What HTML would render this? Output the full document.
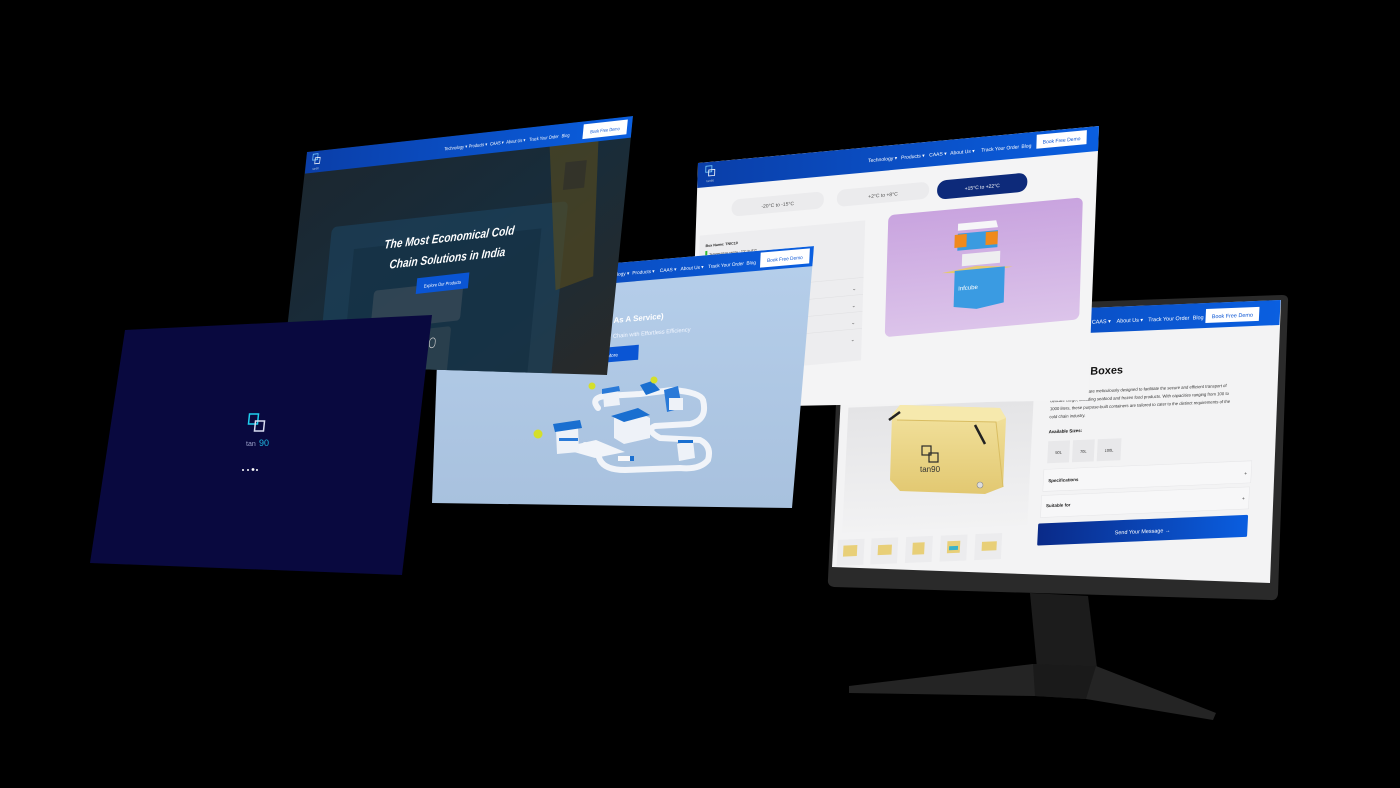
<!DOCTYPE html>
<html><head><meta charset="utf-8"><style>
html,body{margin:0;padding:0;background:#000;width:1400px;height:788px;overflow:hidden}
svg{display:block}
text{font-family:"Liberation Sans",sans-serif}
</style></head><body>
<svg width="1400" height="788" viewBox="0 0 1400 788" xmlns="http://www.w3.org/2000/svg">
<defs>
<linearGradient id="btn" x1="0" x2="1"><stop offset="0" stop-color="#0a2a88"/><stop offset="1" stop-color="#0a5ee0"/></linearGradient>
<linearGradient id="nav" x1="0" x2="1"><stop offset="0" stop-color="#0a3ea8"/><stop offset="1" stop-color="#0a5fe0"/></linearGradient>
<linearGradient id="hero" x1="0" y1="0" x2="1" y2="1"><stop offset="0" stop-color="#1d252c"/><stop offset="0.5" stop-color="#182c3a"/><stop offset="1" stop-color="#2a2a28"/></linearGradient>
<linearGradient id="sky" x1="0" y1="0" x2="0" y2="1"><stop offset="0" stop-color="#b6cfeb"/><stop offset="1" stop-color="#a8c1de"/></linearGradient>
<linearGradient id="purp" x1="0" y1="0" x2="0" y2="1"><stop offset="0" stop-color="#c9a4df"/><stop offset="1" stop-color="#dcc4ea"/></linearGradient>
<linearGradient id="yb" x1="0" y1="0" x2="0" y2="1"><stop offset="0" stop-color="#f3e3a0"/><stop offset="1" stop-color="#e2c871"/></linearGradient>
<linearGradient id="gimg" x1="0" y1="0" x2="0" y2="1"><stop offset="0" stop-color="#e4e4e6"/><stop offset="1" stop-color="#f2f2f3"/></linearGradient>
<clipPath id="heroClip"><polygon points="307,152 633,116 607,375 283,365"/></clipPath>
<clipPath id="blueClip"><polygon points="440,278 814,246 792,508 432,503"/></clipPath>
<clipPath id="whiteClip"><polygon points="698,163 1099,126 1088,400 690,408"/></clipPath>
</defs>

<!-- MONITOR -->
<polygon points="1030,593 1088,596 1097,668 1037,668" fill="#1c1c1c"/>
<polygon points="849,686 1033,664 1096,666 1216,713 1213,720 1086,699 1035,696 849,693" fill="#242424"/>
<polygon points="1033,664 1096,666 1086,699 1035,696" fill="#1a1a1a"/>
<path d="M846,310 L1282,295 Q1289,295 1288,302 L1278,594 Q1277,601 1270,600 L834,587 Q827,586 828,579 L840,316 Q841,310 846,310 Z" fill="#2a2a2a"/>
<polygon points="845,318 1281,300 1270,583 832,567" fill="#f3f3f4"/>
<g transform="matrix(0.99,-0.041,-0.05,1,845,318)">
  <rect x="0" y="0" width="440" height="25" fill="url(#nav)"/>
  <text x="250" y="16" font-size="5.5" fill="#fff">CAAS ▾</text>
  <text x="275" y="16" font-size="5.5" fill="#fff">About Us ▾</text>
  <text x="307" y="16" font-size="5.5" fill="#fff">Track Your Order</text>
  <text x="352" y="16" font-size="5.5" fill="#fff">Blog</text>
  <rect x="365" y="6" width="54" height="14" fill="#fff"/>
  <text x="392" y="15.5" font-size="5.5" fill="#0a55d4" text-anchor="middle">Book Free Demo</text>
  <text x="284" y="67" font-size="11" font-weight="bold" fill="#111" text-anchor="end">Cooler Boxes</text>
  <g font-size="4.3" fill="#333">
  <text x="212" y="85">Tan90 cooler boxes are meticulously designed to facilitate the secure and efficient transport of</text>
  <text x="212" y="93">delicate cargo, including seafood and frozen food products. With capacities ranging from 100 to</text>
  <text x="212" y="101">1000 liters, these purpose-built containers are tailored to cater to the distinct requirements of the</text>
  <text x="212" y="109">cold chain industry.</text>
  </g>
  <text x="212" y="124" font-size="4.5" font-weight="bold" fill="#111">Available Sizes:</text>
  <rect x="212" y="132" width="22" height="22" fill="#e8e8ea"/><text x="223" y="145" font-size="4" fill="#333" text-anchor="middle">50L</text>
  <rect x="237" y="132" width="22" height="22" fill="#e8e8ea"/><text x="248" y="145" font-size="4" fill="#333" text-anchor="middle">70L</text>
  <rect x="262" y="132" width="24" height="22" fill="#e8e8ea"/><text x="274" y="145" font-size="4" fill="#333" text-anchor="middle">100L</text>
  <rect x="209" y="160" width="210" height="22" fill="#f7f7f8" stroke="#e5e5e7" stroke-width="0.5"/>
  <text x="214" y="173" font-size="4.5" font-weight="bold" fill="#222">Specifications</text><text x="412" y="174" font-size="5" fill="#444">+</text>
  <rect x="208" y="186" width="210" height="22" fill="#f7f7f8" stroke="#e5e5e7" stroke-width="0.5"/>
  <text x="213" y="198" font-size="4.5" font-weight="bold" fill="#222">Suitable for</text><text x="411" y="199" font-size="5" fill="#444">+</text>
  <rect x="206" y="214" width="212" height="22" rx="1.5" fill="url(#btn)"/>
  <text x="312" y="228" font-size="5.5" fill="#fff" text-anchor="middle">Send Your Message →</text>
  <rect x="8" y="90" width="187" height="125" fill="url(#gimg)"/>
  <g fill="#ececee">
  <rect x="4" y="222" width="27" height="26"/><rect x="38" y="222" width="27" height="26"/><rect x="73" y="222" width="27" height="26"/><rect x="108" y="222" width="27" height="26"/><rect x="143" y="222" width="27" height="26"/>
  </g>
  <g fill="#e8cf78">
  <rect x="10" y="228" width="14" height="11"/><rect x="45" y="229" width="14" height="10"/><rect x="80" y="228" width="12" height="12"/><rect x="115" y="228" width="13" height="12"/><rect x="150" y="230" width="15" height="9"/>
  </g>
  <rect x="117" y="233" width="9" height="4" fill="#3ab2c8"/>
</g>
<!-- yellow cooler box -->
<path d="M892,415 L900,405 L1000,408 L1006,418 L1003,487 L985,494 L900,491 L890,480 Z" fill="url(#yb)"/>
<path d="M892,415 L900,405 L1000,408 L1006,418 L996,422 L898,420 Z" fill="#f6e9ad"/>
<path d="M897,420 L996,422 L1003,487" fill="none" stroke="#d9bd62" stroke-width="1"/>
<path d="M889,420 L900,412 M975,425 L985,444" stroke="#222" stroke-width="2.5"/>
<rect x="922" y="446" width="9" height="9" fill="none" stroke="#2a2a2a" stroke-width="1.2"/>
<rect x="929" y="453" width="9" height="9" fill="none" stroke="#2a2a2a" stroke-width="1.2"/>
<text x="920" y="472" font-size="8" fill="#333">tan90</text>
<circle cx="980" cy="485" r="3" fill="#ddd" stroke="#888" stroke-width="0.6"/>

<!-- WHITE SCREEN (top right) -->
<polygon points="698,163 1099,126 1088,400 690,408" fill="#f4f4f5"/>
<g clip-path="url(#whiteClip)">
<g transform="matrix(1.0025,-0.0925,-0.03,1,698,163)">
  <rect x="0" y="0" width="401" height="25" fill="url(#nav)"/>
  <rect x="8" y="4" width="6" height="6" fill="none" stroke="#7fd3ff" stroke-width="0.8"/><rect x="11" y="8" width="6" height="6" fill="none" stroke="#fff" stroke-width="0.8"/>
  <text x="9" y="20" font-size="3" fill="#bcd">tan90</text>
  <g font-size="5" fill="#fff">
  <text x="170" y="15">Technology ▾</text><text x="203" y="15">Products ▾</text><text x="231" y="15">CAAS ▾</text><text x="252" y="15">About Us ▾</text><text x="283" y="15">Track Your Order</text><text x="323" y="15">Blog</text>
  </g>
  <rect x="338" y="3" width="50" height="14" fill="#fff"/>
  <text x="363" y="12.5" font-size="5" fill="#0a55d4" text-anchor="middle">Book Free Demo</text>
  <rect x="35" y="40" width="92" height="17" rx="8" fill="#ebebed"/>
  <text x="81" y="51" font-size="5" fill="#555" text-anchor="middle">-20°C to -15°C</text>
  <rect x="140" y="40" width="92" height="17" rx="8" fill="#ebebed"/>
  <text x="186" y="51" font-size="5" fill="#555" text-anchor="middle">+2°C to +8°C</text>
  <rect x="240" y="40" width="90" height="19" rx="9" fill="#0d2a7a"/>
  <text x="285" y="52" font-size="5" fill="#fff" text-anchor="middle">+15°C to +22°C</text>
  <rect x="4" y="73" width="165" height="140" fill="#ededef"/>
  <text x="10" y="85" font-size="3.6" font-weight="bold" fill="#222">Box Name: TNIC10</text>
  <rect x="10" y="89" width="2" height="6" fill="#3b3"/>
  <text x="14" y="94" font-size="3.4" fill="#222">Temperature range : 2°C to 8°C</text>
  <g stroke="#e0e0e2" stroke-width="0.6"><line x1="4" y1="130" x2="169" y2="130"/><line x1="4" y1="147" x2="169" y2="147"/><line x1="4" y1="164" x2="169" y2="164"/><line x1="4" y1="181" x2="169" y2="181"/></g>
  <g font-size="5" fill="#555"><text x="158" y="142">⌄</text><text x="158" y="159">⌄</text><text x="158" y="176">⌄</text><text x="158" y="193">⌄</text></g>
  <rect x="192" y="70" width="194" height="122" rx="6" fill="url(#purp)"/>
  <polygon points="262,85 300,85 302,92 262,92" fill="#f6f6f8"/>
  <rect x="262" y="95" width="40" height="17" fill="#3b9be0"/>
  <rect x="259" y="96" width="12" height="13" fill="#f08a1c"/><rect x="290" y="96" width="12" height="13" fill="#f08a1c"/>
  <rect x="267" y="116" width="38" height="12" fill="#eeeef0"/>
  <polygon points="247,133 282,129 318,133 282,136" fill="#e6c96f"/>
  <polygon points="260,132 310,132 310,168 283,172 260,168" fill="#3a9be2"/>
  <text x="264" y="152" font-size="6" fill="#fff">Infcube</text>
</g>
</g>

<!-- BLUE SCREEN (middle) -->
<polygon points="440,278 814,246 792,508 432,503" fill="url(#sky)"/>
<g clip-path="url(#blueClip)">
<g transform="matrix(0.984,-0.084,-0.046,1,440,278)">
  <rect x="0" y="0" width="380" height="20" fill="url(#nav)"/>
  <g font-size="4.8" fill="#fff">
  <text x="165" y="13">Technology ▾</text><text x="196" y="13">Products ▾</text><text x="224" y="13">CAAS ▾</text><text x="245" y="13">About Us ▾</text><text x="273" y="13">Track Your Order</text><text x="312" y="13">Blog</text>
  </g>
  <rect x="326" y="2" width="50" height="15" fill="#fff"/>
  <text x="351" y="12" font-size="4.8" fill="#0a55d4" text-anchor="middle">Book Free Demo</text>
  <text x="230" y="60" font-size="8" font-weight="bold" fill="#fff" text-anchor="end">CAAS (Cooling As A Service)</text>
  <text x="258" y="75" font-size="5.8" fill="#f2f6ff" text-anchor="end">Empower Your Cold Chain with Effortless Efficiency</text>
  <rect x="140" y="84" width="66" height="15" fill="#0a55d4"/>
  <text x="173" y="94" font-size="4.8" fill="#fff" text-anchor="middle">Know More</text>
</g>
<!-- city -->
<g>
<path d="M598,408 Q590,398 605,396 L640,394 L672,390 Q700,392 703,400 Q708,420 690,424 L655,426 Q645,430 660,438 L700,440 Q712,446 708,460 Q700,470 680,468 L625,470 Q605,470 600,460 Q596,448 585,445" fill="none" stroke="#f1f4f9" stroke-width="6" stroke-linejoin="round" stroke-linecap="round"/>
<path d="M560,448 L595,458 L625,452 L596,440 Z" fill="#f1f4f9"/>
<polygon points="556,430 578,427 579,452 557,454" fill="#eef2f8"/><polygon points="553,424 580,420 582,428 555,432" fill="#1a6fd0"/>
<rect x="559" y="438" width="19" height="3" fill="#2a7ad8"/>
<circle cx="538" cy="434" r="4.5" fill="#d4df2a"/>
<polygon points="614,418 638,412 650,418 650,438 624,444 614,438" fill="#eef2f8"/><polygon points="611,416 638,408 650,415 624,422" fill="#1a6fd0"/>
<polygon points="603,392 618,389 620,405 604,407" fill="#eef2f8"/><polygon points="602,389 619,386 620,391 602,394" fill="#2a7ad8"/>
<circle cx="592" cy="386" r="3.5" fill="#d4df2a"/>
<polygon points="640,385 652,381 660,390 646,395" fill="#1a6fd0"/><circle cx="654" cy="380" r="3.5" fill="#d4df2a"/>
<polygon points="664,390 678,386 682,408 667,412" fill="#2a7ad8"/><rect x="669" y="398" width="14" height="12" fill="#eef2f8"/>
<polygon points="677,444 693,440 695,458 679,461" fill="#eef2f8"/><rect x="678" y="440" width="15" height="3" fill="#1a6fd0"/>
<rect x="618" y="456" width="12" height="5" fill="#f8f8fa"/><rect x="630" y="456" width="4" height="5" fill="#1a6fd0"/>
</g>
</g>

<!-- HERO SCREEN -->
<polygon points="307,152 633,116 607,375 283,365" fill="url(#hero)"/>
<g clip-path="url(#heroClip)">
<g transform="matrix(0.815,-0.09,-0.096,0.985,307,152)">
  <rect x="40" y="80" width="290" height="200" rx="6" fill="#1c4560" opacity="0.6"/>
  <rect x="70" y="105" width="230" height="160" fill="#142f42" opacity="0.7"/>
  <rect x="100" y="150" width="110" height="40" rx="4" fill="#4f5c64" opacity="0.45"/>
  <rect x="80" y="195" width="120" height="60" rx="4" fill="#46525a" opacity="0.4"/>
  <polygon points="300,20 360,20 370,160 325,170" fill="#5a4d1c" opacity="0.6"/>
  <rect x="322" y="40" width="26" height="28" fill="#2b2b2b" opacity="0.6"/>
  <rect x="0" y="0" width="400" height="22" fill="url(#nav)"/>
  <rect x="8" y="3" width="6" height="6" fill="none" stroke="#7fd3ff" stroke-width="0.8"/><rect x="11" y="7" width="6" height="6" fill="none" stroke="#fff" stroke-width="0.8"/>
  <text x="9" y="19" font-size="3" fill="#bcd">tan90</text>
  <g font-size="4.8" fill="#fff">
  <text x="170" y="14">Technology ▾</text><text x="200" y="14">Products ▾</text><text x="226" y="14">CAAS ▾</text><text x="246" y="14">About Us ▾</text><text x="274" y="14">Track Your Order</text><text x="314" y="14">Blog</text>
  </g>
  <rect x="340" y="3" width="54" height="15" fill="#fff"/>
  <text x="367" y="13" font-size="4.8" fill="#0a55d4" text-anchor="middle">Book Free Demo</text>
  <text x="187" y="108" font-size="12.5" font-weight="bold" font-style="italic" fill="#fff" text-anchor="middle">The Most Economical Cold</text>
  <text x="187" y="129" font-size="12.5" font-weight="bold" font-style="italic" fill="#fff" text-anchor="middle">Chain Solutions in India</text>
  <rect x="152" y="142" width="64" height="16" fill="#0a55d4"/>
  <text x="184" y="152.5" font-size="4.8" fill="#fff" text-anchor="middle">Explore Our Products</text>
  <rect x="175" y="205" width="7" height="10" rx="3.5" fill="none" stroke="#ccc" stroke-width="0.8"/>
</g>
</g>

<!-- NAVY LOADER -->
<polygon points="125,330 432,315 402,575 90,563" fill="#09093f"/>
<rect x="249" y="414" width="9" height="10" fill="none" stroke="#1fd0f0" stroke-width="1.5" transform="skewX(-6)" transform-origin="253 419"/>
<rect x="255" y="421" width="9" height="10" fill="none" stroke="#d8dcf0" stroke-width="1.5" transform="skewX(-6)" transform-origin="259 426"/>
<text x="246" y="446" font-size="7" fill="#9aa0c8">tan</text><text x="259" y="446" font-size="9" fill="#1fb8e0">90</text>
<g fill="#fff"><circle cx="243" cy="470" r="1"/><circle cx="248" cy="470" r="1"/><circle cx="253" cy="469.5" r="1.4"/><circle cx="257" cy="470" r="1"/></g>
</svg>
</body></html>
